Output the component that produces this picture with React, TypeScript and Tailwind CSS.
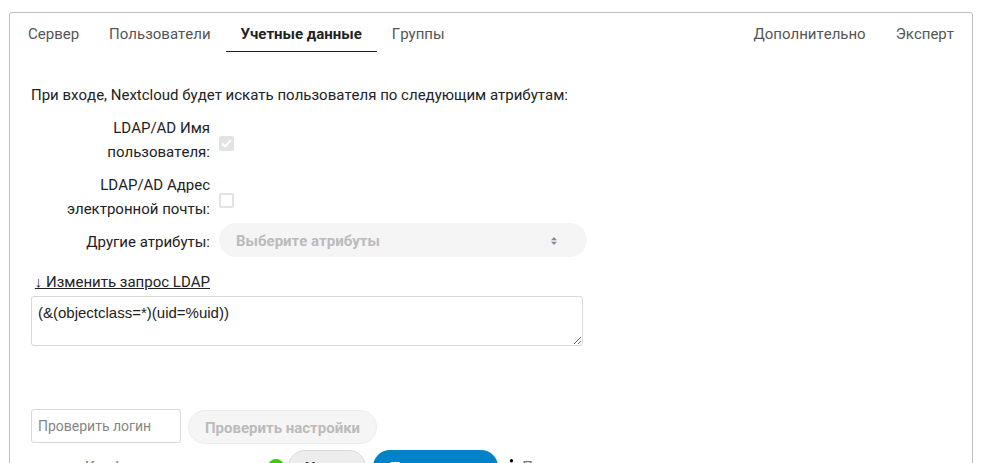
import React from "react";

type Tab = { label: string; active?: boolean };

const mainTabs: Tab[] = [
  { label: "Сервер" },
  { label: "Пользователи" },
  { label: "Учетные данные", active: true },
  { label: "Группы" },
];

const extraTabs: Tab[] = [{ label: "Дополнительно" }, { label: "Эксперт" }];

function TabLink({ label, active }: Tab) {
  return (
    <a
      href="#"
      aria-current={active ? "page" : undefined}
      className={
        active
          ? "border-b border-[#222222] px-[15px] pt-[9px] pb-[5px] font-bold text-[#222222]"
          : "border-b border-transparent px-[15px] pt-[9px] pb-[5px] text-[#555555]"
      }
    >
      {label}
    </a>
  );
}

function AttributeCheckbox({ id, label, checked = false }: { id: string; label: string; checked?: boolean }) {
  return (
    <div className="flex items-center gap-[9px]">
      <label htmlFor={id} className="w-[179px] pl-6 text-right">
        {label}
      </label>
      <span className="grid pt-1.5">
        <input
          id={id}
          type="checkbox"
          defaultChecked={checked}
          disabled
          className="peer col-start-1 row-start-1 size-[15px] appearance-none rounded-xs border-2 border-[#e3e3e5] bg-white checked:bg-[#e3e3e5]"
        />
        <svg
          viewBox="0 0 15 15"
          className="pointer-events-none col-start-1 row-start-1 hidden size-[15px] peer-checked:block"
          fill="none"
          stroke="white"
          strokeWidth="2"
        >
          <path d="M3 7.5 L6 10.5 L12 4" />
        </svg>
      </span>
    </div>
  );
}

export default function App() {
  return (
    <div className="h-screen overflow-hidden bg-white pt-3 pr-[19px] pl-[9px] font-['Roboto','Noto_Sans',sans-serif] text-[15px] leading-6 text-[#222222] [font-kerning:none]">
      <main className="min-h-screen rounded-[3px] border border-[#c0c0c0]">
        <nav className="flex justify-between px-[3px]">
          <div className="flex">
            {mainTabs.map((tab) => (
              <TabLink key={tab.label} {...tab} />
            ))}
          </div>
          <div className="flex">
            {extraTabs.map((tab) => (
              <TabLink key={tab.label} {...tab} />
            ))}
          </div>
        </nav>

        <form className="px-[21px] pt-[31px]">
          <p>При входе, Nextcloud будет искать пользователя по следующим атрибутам:</p>

          <div className="mt-[9px] flex flex-col gap-[9px]">
            <AttributeCheckbox id="username" label="LDAP/AD Имя пользователя:" checked />
            <AttributeCheckbox id="email" label="LDAP/AD Адрес электронной почты:" />
          </div>

          <div className="mt-0.5 flex items-center gap-[9px]">
            <label htmlFor="attributes" className="w-[179px] pt-1 text-right">
              Другие атрибуты:
            </label>
            <div className="grid w-[368px]">
              <select
                id="attributes"
                disabled
                className="col-start-1 row-start-1 h-[34px] appearance-none rounded-full bg-[#f5f5f5] px-[17px] pt-0.5 font-bold text-[#bbbbbb] opacity-100"
              >
                <option>Выберите атрибуты</option>
              </select>
              <svg
                viewBox="0 0 6 8"
                className="pointer-events-none col-start-1 row-start-1 mt-0.5 mr-[30px] h-2 w-1.5 self-center justify-self-end"
                fill="#8489a0"
              >
                <path d="M3 0 L6 3.3 H0 Z M0 4.7 H6 L3 8 Z" />
              </svg>
            </div>
          </div>

          <div className="mt-[13px] w-[179px] text-right">
            <a href="#" className="underline">
              ↓ Изменить запрос LDAP
            </a>
          </div>
          <textarea
            aria-label="Запрос LDAP"
            defaultValue="(&(objectclass=*)(uid=%uid))"
            className="mt-0.5 block h-[50px] w-[552px] resize rounded-[3px] border border-[#d8d8d8] px-1.5 py-1 font-['Liberation_Sans',sans-serif]"
          />

          <div className="mt-[63px] flex gap-[7px]">
            <input
              type="text"
              aria-label="Проверить логин"
              placeholder="Проверить логин"
              className="h-[34px] w-[150px] rounded-[3px] border border-[#d8d8d8] px-1.5 text-sm placeholder:text-[#868686]"
            />
            <button
              type="button"
              disabled
              className="mt-px h-[34px] rounded-full border border-[#ededed] bg-[#f5f5f5] px-4 pt-0.5 font-bold text-[#bbbbbb]"
            >
              Проверить настройки
            </button>
          </div>

          <div className="mt-1.5 flex items-center gap-[7px]">
            <div className="flex items-center gap-1">
              <div className="flex w-[253px] items-center justify-between pl-[54px]">
                <span className="text-[#767676]">Конфигурация в порядке</span>
                <span className="size-4 shrink-0 rounded-full bg-[#37ce02]" />
              </div>
              <button
                type="button"
                className="h-[34px] rounded-full border border-[#dbdbdb] bg-[#ededed] px-4 pt-0.5 font-bold"
              >
                Назад
              </button>
            </div>
            <button type="button" className="h-[34px] rounded-full bg-[#0082c9] px-[17px] pt-0.5 font-bold text-white">
              Продолжить
            </button>
            <a href="#" className="flex items-center gap-1 text-[#767676]">
              <svg viewBox="2 0 13 16" className="h-4 w-[13px]" fill="black">
                <circle cx="8.5" cy="1.7" r="1.7" />
                <path d="M5 5 H9.5 V13 H11 V15 H5 V13 H6.5 V7 H5 Z" />
              </svg>
              Помощь
            </a>
          </div>
        </form>
      </main>
    </div>
  );
}
